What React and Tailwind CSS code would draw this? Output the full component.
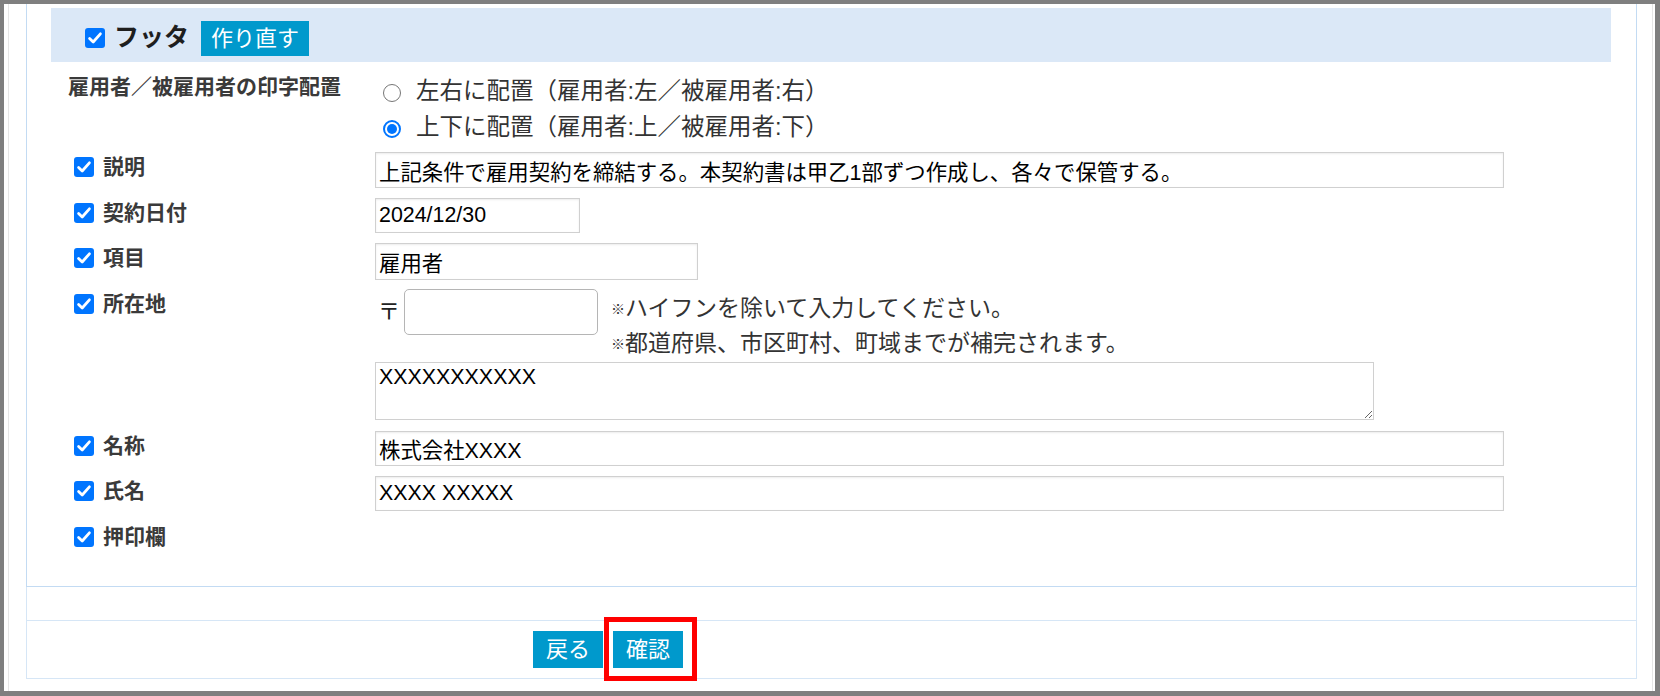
import React from 'react';

const Check = () => (
  <span className="inline-flex h-[20px] w-[20px] shrink-0 items-center justify-center rounded-[3px] bg-[#0075ff]">
    <svg viewBox="0 0 20 20" className="h-[20px] w-[20px]">
      <path d="M4.6 10.4l3.6 3.6 7.2-8.2" fill="none" stroke="#fff" strokeWidth="2.8" strokeLinecap="round" strokeLinejoin="round" />
    </svg>
  </span>
);

const Radio = ({ checked }) =>
  checked ? (
    <span className="mt-[3px] flex h-[18px] w-[18px] shrink-0 items-center justify-center rounded-full border-[2px] border-[#0075ff] bg-white">
      <span className="h-[10px] w-[10px] rounded-full bg-[#0075ff]" />
    </span>
  ) : (
    <span className="mt-[3px] h-[18px] w-[18px] shrink-0 rounded-full border border-[#767676] bg-white" />
  );

const Label = ({ text }) => (
  <div className="flex h-[30px] w-[348px] shrink-0 items-center gap-[9px] pl-[47px]">
    <Check />
    <span className="text-[21px] font-bold leading-[30px] text-[#3a3a3a]">{text}</span>
  </div>
);

const inputCls =
  'block border border-[#d0d0d0] bg-white px-[3px] text-[21.4px] text-black shadow-[inset_0_1px_2px_rgba(0,0,0,0.08)] outline-none';

export default function App() {
  return (
    <div className="h-[696px] w-[1660px] bg-[#7f7f7f] pb-[5px] pl-[4px] pr-[5px] pt-[4px] font-['Liberation_Sans','Noto_Sans_CJK_JP',sans-serif]">
      <div className="h-full bg-white pl-[4px] pr-[2px]">
        <div className="h-full border-x border-[#e6e6e6] pl-[17px] pr-[15px]">
          {/* main section */}
          <div className="border-x border-b border-[#c3dbf3] pb-[34px] pt-[4px]">
            <div className="ml-[24px] mr-[25px] flex h-[54px] items-center bg-[#dbe8f7] pl-[34px] pt-[6px]">
              <Check />
              <span className="ml-[9px] -mt-[3px] text-[25px] font-bold leading-[30px] text-[#1e1e1e]">フッタ</span>
              <span className="ml-[12px] bg-[#0099cc] px-[10px] text-[22px] leading-[35px] text-white">作り直す</span>
            </div>

            <div className="flex">
              <div className="w-[348px] shrink-0 pl-[41px] pt-[10px] text-[21px] font-bold leading-[30px] text-[#3a3a3a]">
                雇用者／被雇用者の印字配置
              </div>
              <div className="pt-[11px] text-[23.5px] text-[#333]">
                <div className="flex h-[36px] items-center pl-[8px]">
                  <Radio />
                  <span className="ml-[15px] leading-[36px]">左右に配置（雇用者:左／被雇用者:右）</span>
                </div>
                <div className="flex h-[36px] items-center pl-[8px]">
                  <Radio checked />
                  <span className="ml-[15px] leading-[36px]">上下に配置（雇用者:上／被雇用者:下）</span>
                </div>
              </div>
            </div>

            <div className="mt-[7px] flex items-start">
              <Label text="説明" />
              <input
                readOnly
                defaultValue="上記条件で雇用契約を締結する。本契約書は甲乙1部ずつ作成し、各々で保管する。"
                className={`${inputCls} h-[36px] w-[1129px]`}
              />
            </div>

            <div className="mt-[10px] flex items-start">
              <Label text="契約日付" />
              <input readOnly defaultValue="2024/12/30" className={`${inputCls} h-[35px] w-[205px]`} />
            </div>

            <div className="mt-[10px] flex items-start">
              <Label text="項目" />
              <input readOnly defaultValue="雇用者" className={`${inputCls} h-[37px] w-[323px]`} />
            </div>

            <div className="mt-[9px] flex items-start">
              <Label text="所在地" />
              <div>
                <div className="flex h-[72px] items-start">
                  <span className="mt-[8px] w-[29px] shrink-0 pl-[3px] text-[22px] leading-[30px] text-[#222]">〒</span>
                  <input
                    readOnly
                    className="block h-[46px] w-[194px] rounded-[5px] border border-[#b5b5b5] bg-white px-[6px] text-[22px] outline-none"
                  />
                  <div className="ml-[13px] pt-[2px] text-[23px] text-[#333]">
                    <div className="flex h-[35px] items-center">
                      <span className="text-[14px] leading-none">※</span>
                      <span className="leading-[35px]">ハイフンを除いて入力してください。</span>
                    </div>
                    <div className="flex h-[35px] items-center">
                      <span className="text-[14px] leading-none">※</span>
                      <span className="leading-[35px]">都道府県、市区町村、町域までが補完されます。</span>
                    </div>
                  </div>
                </div>
                <textarea
                  readOnly
                  defaultValue="XXXXXXXXXXX"
                  className="mt-[1px] block h-[58px] w-[999px] border border-[#d0d0d0] bg-white px-[3px] pt-[1px] text-[21.4px] leading-[26px] text-black outline-none"
                />
              </div>
            </div>

            <div className="mt-[11px] flex items-start">
              <Label text="名称" />
              <input readOnly defaultValue="株式会社XXXX" className={`${inputCls} h-[35px] w-[1129px]`} />
            </div>

            <div className="mt-[10px] flex items-start">
              <Label text="氏名" />
              <input readOnly defaultValue="XXXX XXXXX" className={`${inputCls} h-[35px] w-[1129px]`} />
            </div>

            <div className="mt-[11px] flex items-start">
              <Label text="押印欄" />
            </div>
          </div>

          <div className="h-[34px] border-x border-b border-[#d6e6f6]" />

          <div className="flex h-[58px] items-start border-x border-b border-[#d6e6f6] pl-[506px] pt-[10px]">
            <span className="bg-[#0099cc] px-[13px] text-[22px] leading-[37px] text-white">戻る</span>
            <span className="relative ml-[10px] bg-[#0099cc] px-[13px] text-[22px] leading-[37px] text-white">
              確認
              <span className="pointer-events-none absolute -left-[9px] -top-[14px] h-[64px] w-[93px] border-[5px] border-[#ff0000]" />
            </span>
          </div>
        </div>
      </div>
    </div>
  );
}
